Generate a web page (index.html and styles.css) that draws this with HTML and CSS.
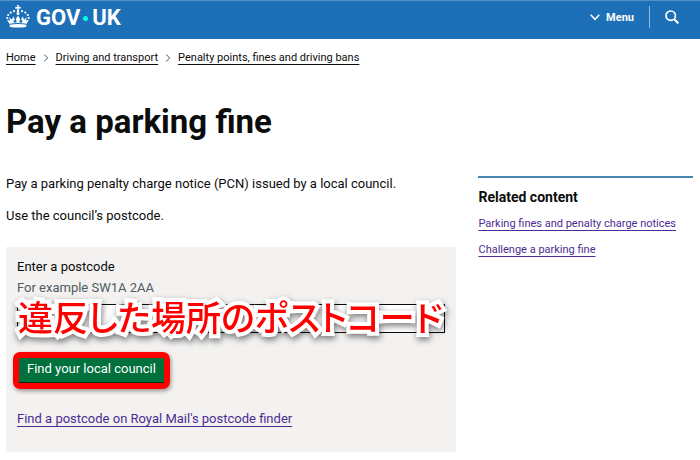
FILE: index.html
```html
<!DOCTYPE html>
<html lang="en">
<head>
  <meta charset="UTF-8">
  <meta name="viewport" content="width=device-width, initial-scale=1">
  <title>Pay a parking fine - GOV.UK</title>
  <link rel="stylesheet" href="styles.css">
</head>
<body>
  <header class="header">
    <a class="logo" href="#" aria-label="GOV.UK">
      <svg class="crown" viewBox="0 0 24 23" width="24" height="23" fill="#fff" aria-hidden="true">
        <path d="M11 0h2l-.4 2.100 2.100-.4v2.100l-2.100-.4.7 3.600h-2.600l.7-3.600-2.100.4V1.700l2.100.4z"/>
        <circle cx="12" cy="8.500" r="1.500"/>
        <circle cx="8" cy="6.200" r="1.100"/><circle cx="16" cy="6.200" r="1.100"/>
        <circle cx="4.700" cy="7.600" r="1.100"/><circle cx="19.300" cy="7.600" r="1.100"/>
        <circle cx="2.200" cy="10" r="1.100"/><circle cx="21.800" cy="10" r="1.100"/>
        <circle cx="1.300" cy="13" r="1.100"/><circle cx="22.700" cy="13" r="1.100"/>
        <path d="M3.300 18.800 1 14.800l2.900 1-.5-3.600 2.500 2.600 1.500-3.600 1.500 3.600-1.500 1.200.8 1.800 2.500-.3-.8-3.500L12 10.500l2.100 3.500-.8 3.500 2.500.3.800-1.800-1.500-1.200 1.500-3.600 1.500 3.600 2.500-2.600-.5 3.600 2.900-1-2.300 4Q12 17.100 3.300 18.800z"/>
        <path d="M3.500 19.800q8.500-1.500 17 0l-.5 2.200q-8 1-16 0z"/>
      </svg>
      <span class="wordmark">GOV<span class="dot"></span>UK</span>
    </a>
    <nav class="header-nav">
      <button class="menu-button" type="button">
        <svg viewBox="0 0 10 7" width="10" height="7" fill="none" stroke="#fff" stroke-width="1.500" aria-hidden="true"><path d="M.7.800 5 5.300 9.300.8"/></svg>
        Menu
      </button>
      <button class="search-button" type="button" aria-label="Search">
        <svg viewBox="0 0 14 14" width="14" height="14" fill="none" stroke="#fff" stroke-width="1.700" aria-hidden="true"><circle cx="5.700" cy="5.700" r="4.700"/><path d="m9 9 4.400 4.400" stroke-width="2"/></svg>
      </button>
    </nav>
  </header>

  <nav class="breadcrumbs" aria-label="Breadcrumb">
    <a href="#">Home</a>
    <svg class="chevron" viewBox="0 0 5 8" width="5" height="8"><path d="m.7.500 3.500 3.500L.7 7.500"/></svg>
    <a href="#">Driving and transport</a>
    <svg class="chevron" viewBox="0 0 5 8" width="5" height="8"><path d="m.7.500 3.500 3.500L.7 7.500"/></svg>
    <a href="#">Penalty points, fines and driving bans</a>
  </nav>

  <div class="page">
    <h1>Pay a parking fine</h1>
    <div class="columns">
      <main>
        <p>Pay a parking penalty charge notice (PCN) issued by a local council.</p>
        <p>Use the council’s postcode.</p>
        <form class="finder">
          <label for="postcode">Enter a postcode</label>
          <div class="hint" id="postcode-hint">For example SW1A 2AA</div>
          <div class="field">
            <input type="text" id="postcode" aria-describedby="postcode-hint">
            <span class="callout" lang="ja">違反した場所のポストコード</span>
          </div>
          <div class="action">
            <button class="submit" type="button">Find your local council</button>
          </div>
          <a class="visited" href="#">Find a postcode on Royal Mail's postcode finder</a>
        </form>
      </main>
      <aside class="related">
        <h2>Related content</h2>
        <a class="visited" href="#">Parking fines and penalty charge notices</a>
        <a class="visited" href="#">Challenge a parking fine</a>
      </aside>
    </div>
  </div>
</body>
</html>
```

FILE: styles.css
```css
* {
  box-sizing: border-box;
}
body {
  margin: 0;
  background: #fff;
  color: #0b0c0c;
  font-family: Roboto, "Liberation Sans", sans-serif;
  font-size: 13px;
  line-height: 16px;
}
h1, h2, p {
  margin: 0;
}
a {
  color: inherit;
  text-decoration-thickness: 1px;
  text-underline-offset: 3px;
}
button {
  padding: 0;
  border: 0;
  background: none;
  color: #fff;
  font-family: inherit;
}

/* header */
.header {
  display: flex;
  justify-content: space-between;
  height: 39px;
  padding: 0 6px;
  border-top: 1px solid #5091c8;
  background: #1d70b8;
  color: #fff;
}
.logo {
  display: flex;
  gap: 6px;
  padding-top: 4px;
  text-decoration: none;
}
.wordmark {
  display: flex;
  align-items: center;
  height: 26px;
  font-size: 22px;
  font-weight: 700;
}
.dot {
  width: 5px;
  height: 5px;
  margin: 0 4px 0 3px;
  border-radius: 50%;
  background: #00ffe0;
}
.header-nav {
  display: flex;
  align-items: flex-start;
  padding-top: 5px;
}
.menu-button {
  display: flex;
  align-items: center;
  gap: 6px;
  height: 22px;
  padding-right: 15px;
  border-right: 1px solid #8eb8dc;
  font-size: 11px;
  font-weight: 700;
}
.search-button {
  display: flex;
  align-items: center;
  height: 22px;
  padding: 0 15px;
}

/* breadcrumbs */
.breadcrumbs {
  display: flex;
  align-items: center;
  gap: 7px;
  padding: 11px 6px 0;
  font-size: 11px;
}
.chevron {
  width: 6px;
  fill: none;
  stroke: #505a5f;
}

/* content */
.page {
  padding: 36px 7px 7px 6px;
}
h1 {
  margin-bottom: 34px;
  font-size: 33px;
  line-height: 40px;
}
.columns {
  display: grid;
  grid-template-columns: 21fr 10fr;
  gap: 22px;
  align-items: start;
}
main p {
  margin-bottom: 16px;
}
.finder {
  display: flex;
  flex-direction: column;
  align-items: flex-start;
  margin-top: 23px;
  padding: 12px 11px 25px;
  background: #f3f2f1;
}
.hint {
  margin: 5px 0 8px;
  color: #505a5f;
}
.field {
  position: relative;
  width: 100%;
}
.field input {
  display: block;
  width: 100%;
  height: 29px;
  border: 1px solid #0b0c0c;
  border-radius: 0;
  background: #fff;
}
.callout {
  position: absolute;
  top: -6px;
  left: 1px;
  color: #f00;
  font-family: "Noto Sans CJK JP", sans-serif;
  font-size: 35px;
  font-weight: 500;
  font-feature-settings: "palt";
  line-height: 36px;
  white-space: nowrap;
  -webkit-text-stroke: 8px #fff;
  paint-order: stroke fill;
  filter: drop-shadow(1px 3px 3px rgba(0, 0, 0, 0.5));
  pointer-events: none;
}
.action {
  margin: 19px 0 22px -4px;
  border: 6px solid #f00;
  border-radius: 7px;
  box-shadow: 1px 2px 4px rgba(0, 0, 0, 0.4);
}
.submit {
  display: block;
  height: 25px;
  padding: 0 8px 3px;
  border-bottom: 1px solid #002d18;
  background: #00703c;
  font-size: 13px;
}
.visited {
  color: #4c2c92;
}
.related {
  display: flex;
  flex-direction: column;
  align-items: flex-start;
  gap: 10px;
  border-top: 2px solid #4a84ae;
  padding-top: 10px;
  font-size: 11px;
}
h2 {
  font-size: 14px;
  line-height: 18px;
}
```
